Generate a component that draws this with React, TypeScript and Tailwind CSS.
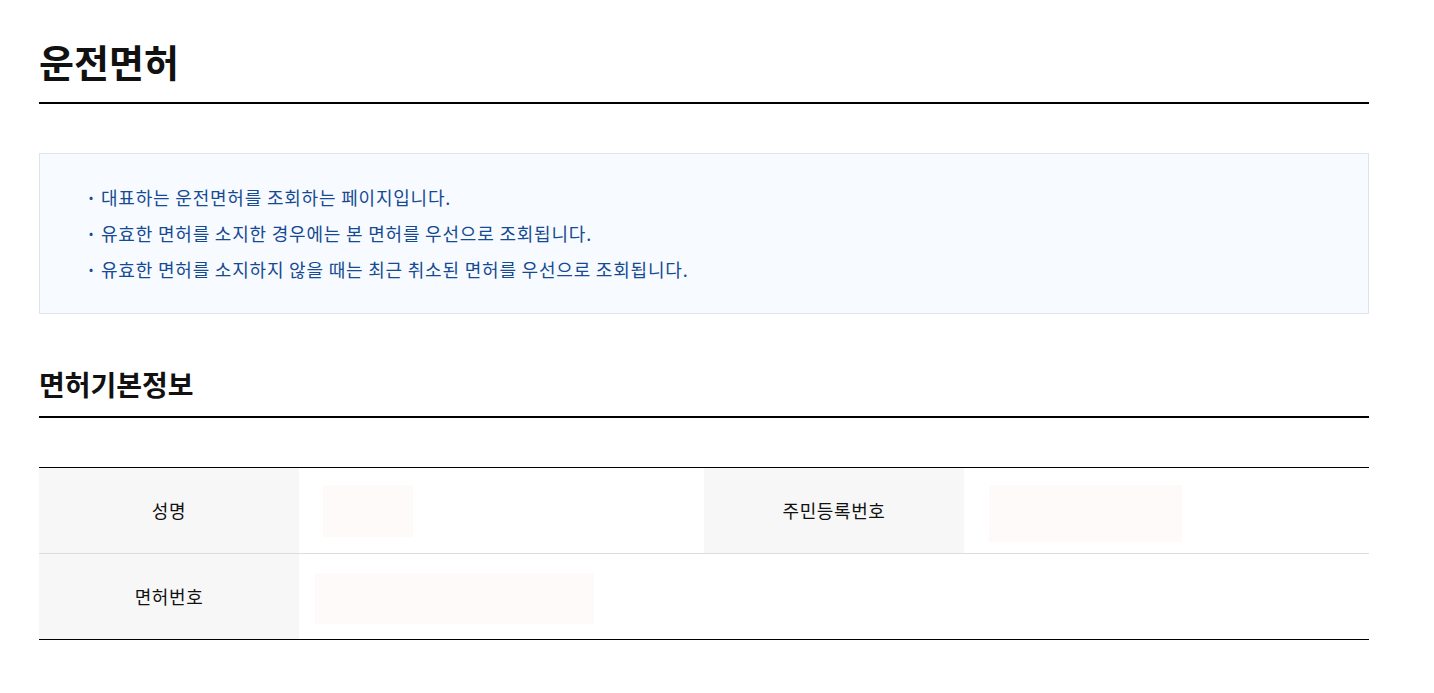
import React from 'react';

const notices = [
  '대표하는 운전면허를 조회하는 페이지입니다.',
  '유효한 면허를 소지한 경우에는 본 면허를 우선으로 조회됩니다.',
  '유효한 면허를 소지하지 않을 때는 최근 취소된 면허를 우선으로 조회됩니다.',
];

// redacted value placeholder
function Masked({ className }: { className: string }) {
  return <div className={`bg-[#fffafa] ${className}`} />;
}

export default function App() {
  return (
    <div
      className="min-h-screen bg-white text-[#111]"
      style={{ fontFamily: '"Noto Sans CJK KR", "Noto Sans", sans-serif' }}
    >
      <div className="ml-[39px] w-[1330px] pb-[54px]">
        {/* Page title */}
        <div className="pt-[37px] pb-[17px] border-b-2 border-black">
          <h1 className="text-[38px] leading-[48px] font-bold">운전면허</h1>
        </div>

        {/* Notice box */}
        <div className="mt-[49px] border border-[#dfe3ea] bg-[#f7fbff] pt-[25px] pb-[26px] pl-[49px]">
          <ul className="text-[#164a92] text-[18px] leading-[36px] tracking-[0.8px]">
            {notices.map((n) => (
              <li key={n} className="flex">
                <span className="w-[12px] shrink-0 text-[12px] tracking-normal">•</span>
                <span>{n}</span>
              </li>
            ))}
          </ul>
        </div>

        {/* Section title */}
        <div className="mt-[52px] pb-[14px] border-b-2 border-black">
          <h2 className="text-[28px] leading-[36px] font-semibold">면허기본정보</h2>
        </div>

        {/* Info table */}
        <table className="mt-[49px] w-full table-fixed border-collapse border-t border-b border-black text-[18px] tracking-[0.6px]">
          <colgroup>
            <col className="w-[260px]" />
            <col className="w-[405px]" />
            <col className="w-[260px]" />
            <col className="w-[405px]" />
          </colgroup>
          <tbody>
            <tr className="h-[86px] border-b border-[#dddddd]">
              <th className="bg-[#f7f7f7] font-normal">성명</th>
              <td className="pl-[24px]">
                <Masked className="w-[90px] h-[52px]" />
              </td>
              <th className="bg-[#f7f7f7] font-normal">주민등록번호</th>
              <td className="pl-[25px]">
                <Masked className="w-[193px] h-[57px] mt-[5px]" />
              </td>
            </tr>
            <tr className="h-[86px]">
              <th className="bg-[#f7f7f7] font-normal">면허번호</th>
              <td colSpan={3} className="pl-[16px]">
                <Masked className="w-[279px] h-[51px] mt-[3px]" />
              </td>
            </tr>
          </tbody>
        </table>
      </div>
    </div>
  );
}
